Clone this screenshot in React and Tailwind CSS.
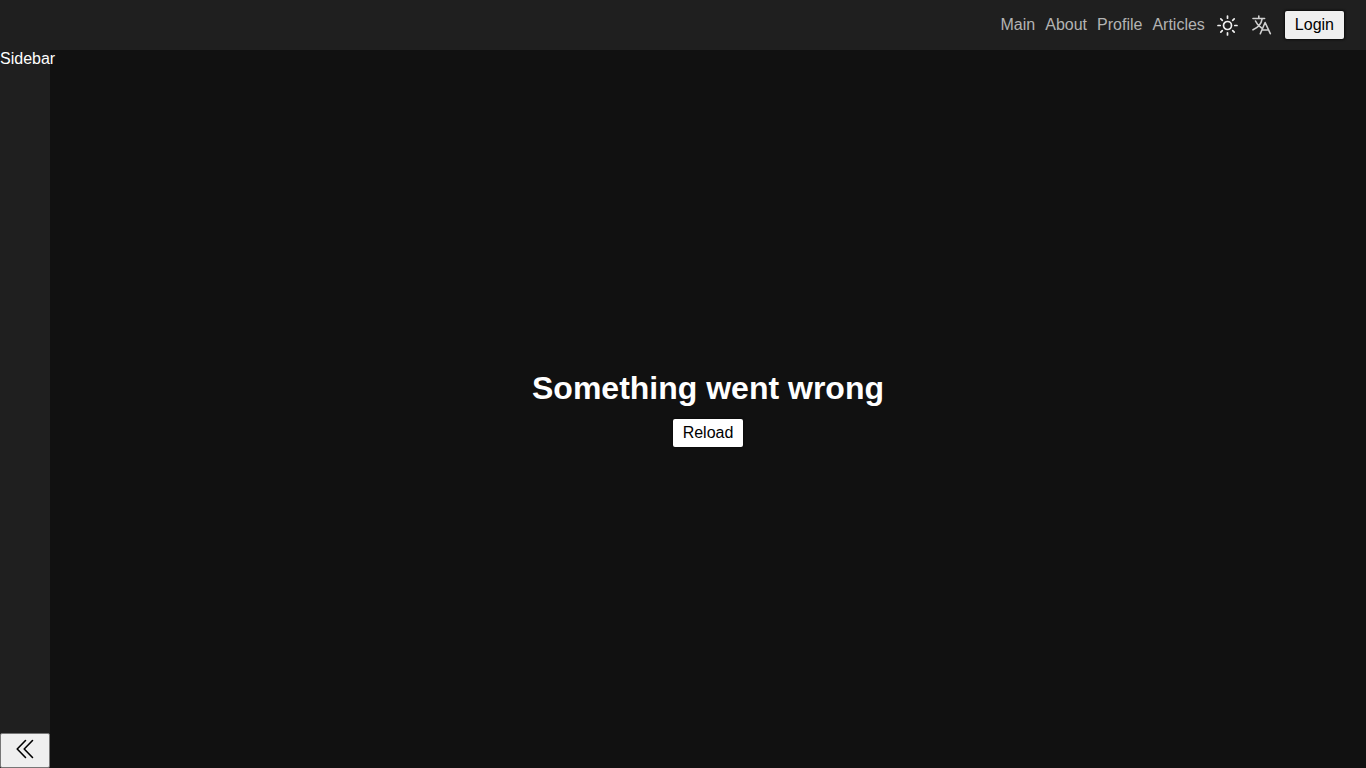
const links = ['Main', 'About', 'Profile', 'Articles']

function SunIcon() {
  return (
    <svg width="21" height="21" viewBox="0 0 21 21" fill="none" stroke="currentColor" strokeWidth="1.7" strokeLinecap="round" aria-hidden="true">
      <circle cx="10.5" cy="10.5" r="4" />
      <path d="M10.5 1v2.2M10.5 17.8V20M1 10.5h2.2M17.8 10.5H20M3.8 3.8l1.5 1.5M15.7 15.7l1.5 1.5M3.8 17.2l1.5-1.5M15.7 5.3l1.5-1.5" />
    </svg>
  )
}

function TranslateIcon() {
  return (
    <svg width="20" height="20" viewBox="0 0 20 20" fill="none" stroke="currentColor" strokeWidth="1.6" strokeLinecap="round" strokeLinejoin="round" aria-hidden="true">
      <path d="M6.8 1v2.4M1 3.5h11.6M3.5 6c1.5 3.5 3.5 5.4 5.8 6.8M10.2 3.6C9.2 9.5 5.5 12.8 1 14.8M8.3 18.7l4.8-11.2 5.2 11.2M9.9 15h6.7" />
    </svg>
  )
}

function DoubleChevronLeft() {
  return (
    <svg width="18" height="20" viewBox="0 0 18 20" fill="none" stroke="currentColor" strokeWidth="1.6" strokeLinecap="round" strokeLinejoin="round" aria-hidden="true">
      <path d="M9.5 1.5 1.2 10l8.300 8.500M16.500 1.500 8.200 10l8.300 8.500" />
    </svg>
  )
}

function Navbar() {
  return (
    <header className="flex h-[50px] items-center justify-end bg-[#1f1f1f] pr-[22px]">
      <nav className="flex gap-2.5 text-[#b3b3b3]">
        {links.map((name) => (
          <a key={name} href="#">{name}</a>
        ))}
      </nav>
      <button aria-label="Toggle theme" className="ml-3 text-[#f0f0f0]">
        <SunIcon />
      </button>
      <button aria-label="Change language" className="ml-3.5 text-[#d0d0d0]">
        <TranslateIcon />
      </button>
      <button className="ml-[13px] h-7 rounded-xs bg-[#efefef] px-2.5 text-black shadow-[0_0_2px_1px_#0c0c0c]">Login</button>
    </header>
  )
}

function Sidebar() {
  return (
    <aside className="flex w-[50px] shrink-0 flex-col justify-between bg-[#1f1f1f] text-white">
      <span className="leading-[18px]">Sidebar</span>
      <button aria-label="Collapse sidebar" className="flex h-[35px] items-center justify-center rounded-xs border border-[#767676] bg-[#efefef] pb-1 text-black">
        <DoubleChevronLeft />
      </button>
    </aside>
  )
}

export default function App() {
  return (
    <div className="flex min-h-screen flex-col bg-[#111111] font-['Liberation_Sans',Arial,sans-serif] text-base">
      <Navbar />
      <div className="flex grow">
        <Sidebar />
        <main className="flex grow flex-col items-center justify-center gap-3.5 text-white">
          <h1 className="text-[32px] leading-[34px] font-bold">Something went wrong</h1>
          <button className="h-7 rounded-xs bg-white px-2.5 text-black shadow-[0_0_2px_1px_#0c0c0c]">Reload</button>
        </main>
      </div>
    </div>
  )
}
